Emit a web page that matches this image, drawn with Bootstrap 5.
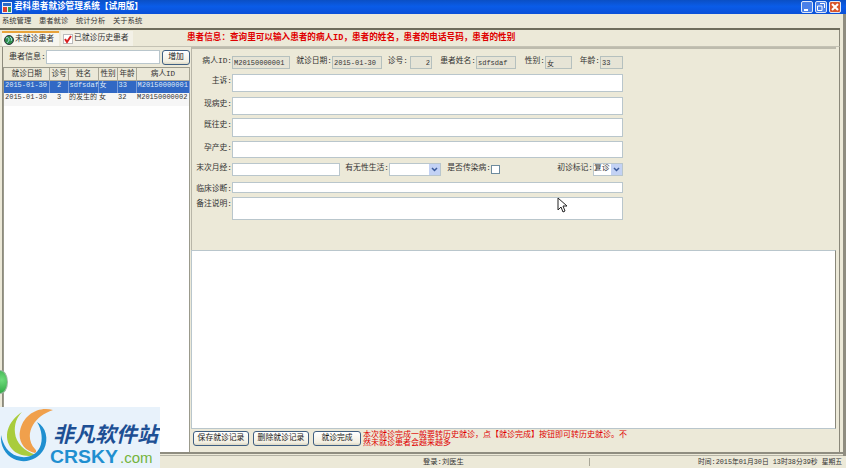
<!DOCTYPE html>
<html lang="zh-CN">
<head>
    <meta charset="UTF-8">
    <title>君科患者就诊管理系统【试用版】</title>
    <link href="https://cdn.jsdelivr.net/npm/bootstrap@5.3.0/dist/css/bootstrap.min.css" rel="stylesheet">
    <style>
        :root {
            --xp-face: #ece9d8;
            --xp-line: #b9c6cc;
            --xp-text: #333333;
        }

        html, body {
            margin: 0;
            width: 846px;
            height: 468px;
            overflow: hidden;
            background: var(--xp-face);
            font-family: "Liberation Mono", "Noto Sans CJK SC", monospace;
            font-size: 8px;
            line-height: 1.2;
            color: var(--xp-text);
        }

        .xp-window {
            position: relative;
            width: 846px;
            height: 468px;
            overflow: hidden;
        }

        /* title bar */
        .xp-title {
            height: 14px;
            padding: 0 5px 0 2px;
            background: linear-gradient(#0b4fc4, #0a5ce8 45%, #0a50d8);
            color: #fff;
            font-weight: 700;
            font-size: 8.6px;
        }

        .xp-wbtn {
            width: 12px;
            height: 12px;
            border: 1px solid #dfe8f8;
            border-radius: 2px;
            background: #4a80e8;
        }

        .xp-wbtn.is-close { background: #d9562c; }

        .xp-menu {
            height: 14px;
            padding-left: 2px;
            gap: 8px;
            font-size: 7.3px;
            background: var(--xp-face);
        }

        .xp-menu span { width: 29px; white-space: nowrap; }

        .xp-rule {
            height: 2px;
            background: #6f6d5c;
            margin-right: 6px;
        }

        /* tabs */
        .xp-tabs {
            height: 16px;
            padding-left: 2px;
            margin-right: 6px;
            border-right: 1px solid #8a887a;
        }

        .xp-tab {
            height: 15px;
            padding: 0 2px;
            gap: 1px;
            white-space: nowrap;
            font-size: 7.8px;
            background: #f3f1e7;
        }

        .xp-tab.is-on {
            width: 57px;
            background: #f7f6ef;
            border-top: 2px solid #e8a33a;
        }

        .xp-tab.is-off {
            width: 72px;
            margin-left: 2px;
            margin-top: 1px;
        }

        .xp-tip {
            margin-left: 54px;
            color: #e00000;
            font-weight: 700;
            font-size: 8.6px;
            white-space: nowrap;
        }

        /* main area */
        .xp-main {
            height: 406px;
            padding-left: 2px;
            margin-right: 6px;
            border-top: 1px solid #c4c2b4;
            border-right: 1px solid #8a887a;
        }

        .xp-left {
            width: 188px;
            border-left: 1px solid #8d8b7d;
        }

        .xp-search {
            height: 20px;
            margin-top: 3px;
            padding-left: 6px;
        }

        .xp-search label { width: 37px; white-space: nowrap; }

        .form-control.xp-input {
            min-height: 0;
            padding: 0 1px;
            border: 1px solid var(--xp-line);
            border-radius: 0;
            background: #fff;
            font-size: 7px;
            color: var(--xp-text);
            resize: none;
        }

        .form-control.xp-input:disabled {
            background: #e6e4d6;
            border-color: #b5c0be;
            opacity: 1;
        }

        .xp-search .xp-input { width: 114px; height: 14px; }

        .btn.xp-btn {
            padding: 0;
            font-size: 7.8px;
            line-height: 1;
            color: #222;
            border: 1px solid #3f5f82;
            border-radius: 3px;
            background: linear-gradient(#ffffff, #f2efe2 80%, #dcd8c4);
        }

        .xp-search .xp-btn { width: 28px; height: 15px; margin-left: 2px; }

        .xp-list {
            flex: 1;
            background: #fff;
            border: 1px solid #9b9a8c;
            border-bottom: 0;
            margin-top: -3px;
        }

        .table.xp-table {
            width: 185px;
            margin: 0;
            table-layout: fixed;
            font-size: 7px;
            --bs-table-bg: transparent;
        }

        .xp-table th, .xp-table td {
            padding: 0 0 0 1px;
            height: 13px;
            white-space: nowrap;
            overflow: hidden;
            border: 0;
            color: var(--xp-text);
            font-weight: 400;
        }

        .xp-table th {
            height: 12px;
            text-align: center;
            font-size: 7.6px;
            background: #ebe8d8;
            border-right: 1px solid #a8a696;
            border-bottom: 1px solid #a8a696;
        }

        .xp-table tr.is-picked td {
            background: #3168c4;
            color: #dfe8f8;
            border-right: 1px solid #7c9cd8;
        }

        .xp-table tr.is-plain td { background: #f6f6f6; }

        .xp-right {
            width: 645px;
            margin-left: 1px;
        }

        .xp-form {
            height: 203px;
            padding-top: 7px;
            border-top: 2px solid #bdbbad;
            border-left: 1px solid #b8b6a8;
            display: grid;
            grid-template-rows: 18px 23px 21px 23px 22px 19px 15px 23px;
            font-size: 7.8px;
        }

        .xp-lab {
            text-align: right;
            white-space: nowrap;
            padding-top: 1px;
        }

        .xp-line-top {
            display: grid;
            margin-left: 10px;
            grid-template-columns: 30px 58px 42px 50px 28px 22px 44px 40px 29px 27px 28px 23px;
        }

        .xp-line-top .xp-input { height: 13px; }

        .xp-line-wide {
            display: grid;
            grid-template-columns: 40px 391px;
        }

        .xp-line-wide .xp-lab { padding-top: 3px; }

        .xp-h18 { height: 18px; }
        .xp-h19 { height: 19px; }
        .xp-h17 { height: 17px; }
        .xp-h11 { height: 11px; }
        .xp-h23 { height: 23px; }

        .xp-line-mix {
            display: grid;
            grid-template-columns: 40px 108px 49px 52px 50px 9px 93px 30px;
        }

        .xp-line-mix .xp-input { height: 13px; }

        .xp-combo {
            height: 13px;
            background: #fff;
            border: 1px solid var(--xp-line);
            font-size: 7.8px;
            overflow: hidden;
        }

        .xp-combo-arrow {
            width: 11px;
            height: 11px;
            background: #c3d2f4;
        }

        .form-check-input.xp-check {
            width: 9px;
            height: 9px;
            margin: 2px 0 0;
            border: 1px solid #6d8b9e;
            border-radius: 0;
        }

        .xp-note {
            height: 180px;
            background: #fff;
            border: 1px solid var(--xp-line);
            border-right: 1px solid #8a887a;
        }

        .xp-actions {
            height: 23px;
            padding: 2px 0 0 2px;
            gap: 4px;
        }

        .xp-actions .xp-btn { height: 15px; width: 56px; white-space: nowrap; }
        .xp-actions .xp-btn.is-short { width: 48px; }

        .xp-warn {
            width: 268px;
            color: #e00000;
            font-size: 8px;
            line-height: 8px;
            margin-left: -2px;
        }

        .xp-foot-rule {
            height: 4px;
            border-top: 2px solid #8f8d80;
            border-bottom: 1px solid #b5b3a5;
            margin-right: 3px;
        }

        .xp-status {
            height: 12px;
            font-size: 7.3px;
            white-space: nowrap;
        }

        .xp-status-a { width: 590px; padding-left: 423px; border-right: 1px solid #a9a798; }
        .xp-status-b { flex: 1; padding-left: 108px; font-size: 6.8px; }

        .xp-edge {
            position: absolute;
            top: 14px;
            right: 0;
            width: 3px;
            height: 442px;
            background: #8f8d80;
        }

        /* things lying over the window */
        .xp-badge {
            position: absolute;
            left: -7px;
            top: 370px;
            width: 15px;
            height: 24px;
            border-radius: 50%;
            background: radial-gradient(circle at 60% 40%, #6fdc7c, #2aa33e);
            border: 1px solid #9fb8a4;
        }

        .xp-logo {
            position: absolute;
            left: 0;
            top: 407px;
        }

        .xp-cursor {
            position: absolute;
            left: 557px;
            top: 197px;
        }
    </style>
</head>
<body>
<div class="xp-window d-flex flex-column">

    <div class="xp-title d-flex align-items-center">
        <svg width="10" height="11" viewBox="0 0 10 11" class="me-1"><rect width="10" height="11" fill="#e8eef8"/><rect x="1" y="1" width="8" height="3" fill="#2a6ac8"/><rect x="1" y="5" width="4" height="5" fill="#d84030"/><rect x="6" y="5" width="3" height="5" fill="#3a9a50"/></svg>
        <span>君科患者就诊管理系统【试用版】</span>
        <div class="ms-auto d-flex gap-1">
            <div class="xp-wbtn d-flex align-items-end justify-content-center"><svg width="6" height="5"><rect x="0" y="2" width="4" height="2" fill="#fff"/></svg></div>
            <div class="xp-wbtn d-flex align-items-center justify-content-center"><svg width="8" height="8"><path d="M3 .5h4.5v4.5M.5 3h4.5v4.5H.5z" fill="none" stroke="#fff"/></svg></div>
            <div class="xp-wbtn is-close d-flex align-items-center justify-content-center"><svg width="8" height="8"><path d="M1 1l6 6M7 1L1 7" stroke="#fff" stroke-width="2"/></svg></div>
        </div>
    </div>

    <div class="xp-menu d-flex align-items-center">
        <span>系统管理</span><span>患者就诊</span><span>统计分析</span><span>关于系统</span>
    </div>
    <div class="xp-rule"></div>

    <div class="xp-tabs d-flex align-items-end">
        <div class="xp-tab is-on d-flex align-items-center">
            <svg width="10" height="10" viewBox="0 0 10 10"><circle cx="5" cy="5" r="4.5" fill="#2f8f4a" stroke="#334"/><path d="M2 3c2-1 3 0 3 2s-2 2-2 3M6 2c2 1 2 3 1 4" stroke="#a8e0f0" fill="none"/></svg>
            <span>未就诊患者</span>
        </div>
        <div class="xp-tab is-off d-flex align-items-center">
            <svg width="10" height="10" viewBox="0 0 10 10"><rect x=".5" y=".5" width="9" height="9" fill="#fff" stroke="#bbb"/><path d="M2 5l2 3 4-6" fill="none" stroke="#d82020" stroke-width="2"/></svg>
            <span>已就诊历史患者</span>
        </div>
        <div class="xp-tip align-self-center">患者信息：查询里可以输入患者的病人ID，患者的姓名，患者的电话号码，患者的性别</div>
    </div>

    <div class="xp-main d-flex">
        <div class="xp-left d-flex flex-column">
            <div class="xp-search d-flex align-items-start">
                <label class="pt-1">患者信息:</label>
                <input class="form-control xp-input" type="text">
                <button class="btn xp-btn" type="button">增加</button>
            </div>
            <div class="xp-list">
                <table class="table xp-table">
                    <colgroup><col style="width:45px"><col style="width:19px"><col style="width:30px"><col style="width:19px"><col style="width:19px"><col style="width:53px"></colgroup>
                    <thead>
                        <tr><th>就诊日期</th><th>诊号</th><th>姓名</th><th>性别</th><th>年龄</th><th>病人ID</th></tr>
                    </thead>
                    <tbody>
                        <tr class="is-picked"><td>2015-01-30</td><td class="text-center">2</td><td>sdfsdaf</td><td>女</td><td>33</td><td>M20150000001</td></tr>
                        <tr class="is-plain"><td>2015-01-30</td><td class="text-center">3</td><td>的发生的</td><td>女</td><td>32</td><td>M20150000002</td></tr>
                    </tbody>
                </table>
            </div>
        </div>

        <div class="xp-right d-flex flex-column">
            <div class="xp-form">
                <div class="xp-line-top">
                    <div class="xp-lab">病人ID:</div><input class="form-control xp-input" disabled value="M20150000001">
                    <div class="xp-lab">就诊日期:</div><input class="form-control xp-input" disabled value="2015-01-30">
                    <div class="xp-lab pe-1">诊号:</div><input class="form-control xp-input text-end" disabled value="2">
                    <div class="xp-lab">患者姓名:</div><input class="form-control xp-input" disabled value="sdfsdaf">
                    <div class="xp-lab">性别:</div><input class="form-control xp-input" disabled value="女">
                    <div class="xp-lab">年龄:</div><input class="form-control xp-input" disabled value="33">
                </div>
                <div class="xp-line-wide"><div class="xp-lab">主诉:</div><textarea class="form-control xp-input xp-h18"></textarea></div>
                <div class="xp-line-wide"><div class="xp-lab">现病史:</div><textarea class="form-control xp-input xp-h18"></textarea></div>
                <div class="xp-line-wide"><div class="xp-lab">既往史:</div><textarea class="form-control xp-input xp-h19"></textarea></div>
                <div class="xp-line-wide"><div class="xp-lab">孕产史:</div><textarea class="form-control xp-input xp-h17"></textarea></div>
                <div class="xp-line-mix">
                    <div class="xp-lab">末次月经:</div><input class="form-control xp-input" type="text">
                    <div class="xp-lab">有无性生活:</div>
                    <div class="xp-combo d-flex justify-content-end">
                        <div class="xp-combo-arrow d-flex align-items-center justify-content-center"><svg width="7" height="5"><path d="M1 1l2.5 2.5L6 1" fill="none" stroke="#3a5a9a" stroke-width="1.5"/></svg></div>
                    </div>
                    <div class="xp-lab">是否传染病:</div><input class="form-check-input xp-check" type="checkbox">
                    <div class="xp-lab">初诊标记:</div>
                    <div class="xp-combo d-flex justify-content-between">
                        <span>复诊</span>
                        <div class="xp-combo-arrow flex-shrink-0 d-flex align-items-center justify-content-center"><svg width="7" height="5"><path d="M1 1l2.5 2.5L6 1" fill="none" stroke="#3a5a9a" stroke-width="1.5"/></svg></div>
                    </div>
                </div>
                <div class="xp-line-wide"><div class="xp-lab">临床诊断:</div><input class="form-control xp-input xp-h11" type="text"></div>
                <div class="xp-line-wide"><div class="xp-lab">备注说明:</div><textarea class="form-control xp-input xp-h23"></textarea></div>
            </div>

            <div class="xp-note"></div>

            <div class="xp-actions d-flex align-items-start">
                <button class="btn xp-btn" type="button">保存就诊记录</button>
                <button class="btn xp-btn" type="button">删除就诊记录</button>
                <button class="btn xp-btn is-short" type="button">就诊完成</button>
                <div class="xp-warn">本次就诊完成一般要转历史就诊，点【就诊完成】按钮即可转历史就诊。不然未就诊患者会越来越多</div>
            </div>
        </div>
    </div>

    <div class="xp-foot-rule"></div>
    <div class="xp-status d-flex align-items-center">
        <div class="xp-status-a">登录:刘医生</div>
        <div class="xp-status-b">时间:2015年01月30日 13时38分39秒 星期五</div>
    </div>

    <div class="xp-edge"></div>
    <div class="xp-badge"></div>

    <svg class="xp-logo" width="160" height="61" viewBox="0 0 160 61">
        <rect width="160" height="61" fill="#e8f2fb"/>
        <path d="M22 5C8 14 2 30 12 42c6 7 16 8 24 6C24 44 16 36 15 26 14 17 17 10 22 5z" fill="#a9cc3c"/>
        <path d="M53 3C38-1 23 8 20 24c-2 10 4 20 15 22 2-1 1-3 0-4-6-6-7-16-2-24 4-7 11-12 20-15z" fill="#f0a04c"/>
        <path d="M37 15c9 5 12 17 7 27-6 11-19 15-30 10C5 48 0 38 1 28c2 10 7 18 16 21 9 3 19 0 23-9 3-7 2-17-3-25z" fill="#1f8fd0"/>
        <circle cx="83" cy="26" r="1.6" fill="#28a0d8"/>
        <text x="53" y="35" font-family="'Noto Sans CJK SC',sans-serif" font-size="21" font-weight="700" font-style="italic" fill="#1d4f94">非凡软件站</text>
        <text x="50" y="56" font-family="'Liberation Sans',sans-serif" font-size="18" font-weight="700" fill="#1f8fd0" textLength="68" lengthAdjust="spacingAndGlyphs">CRSKY</text>
        <text x="120" y="56" font-family="'Liberation Sans',sans-serif" font-size="15" fill="#74b43c">.com</text>
    </svg>

    <svg class="xp-cursor" width="11" height="17" viewBox="0 0 11 17"><path d="M1 1v12l3-3 2 5 2-1-2-5h4z" fill="#fff" stroke="#222"/></svg>
</div>
<script src="https://cdn.jsdelivr.net/npm/bootstrap@5.3.0/dist/js/bootstrap.bundle.min.js"></script>
</body>
</html>
